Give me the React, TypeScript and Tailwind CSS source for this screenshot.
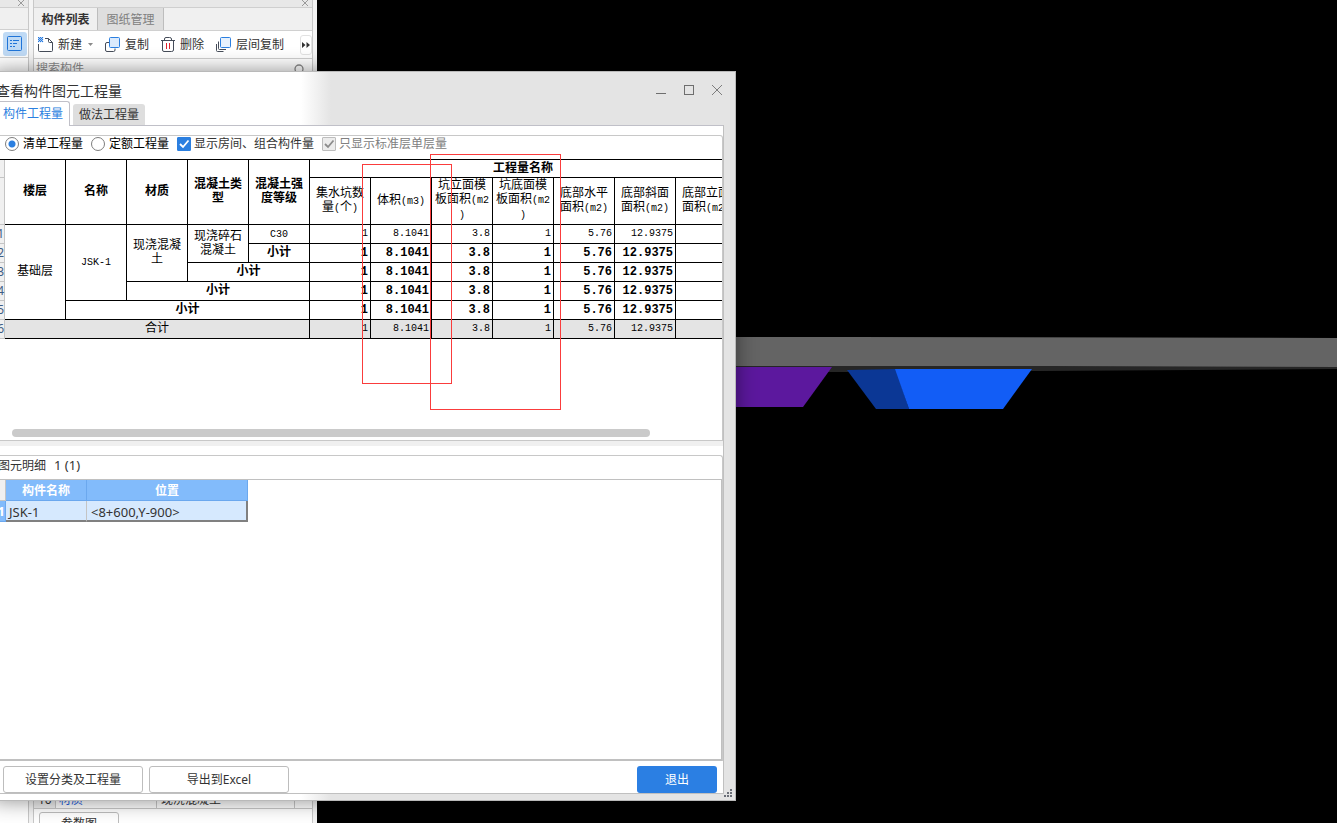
import React from 'react';

const GREY_TEXT = 'text-[#333333]';

/* ---------- model view behind the windows ---------- */

function ModelView() {
  return (
    <div className="relative min-w-0 flex-1 overflow-hidden bg-black">
      <svg className="absolute top-[330px] left-0" width="1020" height="90" viewBox="317 330 1020 90">
        <polygon points="700,366 1337,364 1337,369 1040,371 847,372 700,372" fill="#262626" />
        <polygon points="700,337 847,337 1337,338 1337,367 1050,366 700,366" fill="#646464" />
        <polygon points="700,367 832,367 803,407 700,407" fill="#5c189e" />
        <polygon points="847,370 896,369 909,409 876,409" fill="#0b3795" />
        <polygon points="895,369 1032,369 1003,409 909,409" fill="#125df6" />
      </svg>
    </div>
  );
}

/* ---------- component list panel ---------- */

function CloseGlyph() {
  return (
    <svg width="8" height="8" viewBox="0 0 8 8" stroke="#9a9a9a" fill="none">
      <path d="M1 0 L7 6 M7 0 L1 6" />
    </svg>
  );
}

function NewIcon() {
  return (
    <svg width="16" height="16" viewBox="0 0 16 16" fill="none" stroke="#454c59">
      <path d="M.5 7 V13.500 Q.5 14.500 1.500 14.500 H13.500 Q14.500 14.500 14.500 13.500 V5.500 L10.500 1.500 H7" />
      <path d="M10.500 1.500 V4.500 Q10.500 5.500 11.500 5.500 H14.500" />
      <path
        d="M0 0h1v1h-1z M2 0h1v1h-1z M4 0h1v1h-1z M1 1h1v1h-1z M3 1h1v1h-1z M0 2h1v1h-1z M2 2h1v1h-1z M4 2h1v1h-1z M1 3h1v1h-1z M3 3h1v1h-1z M0 4h1v1h-1z M2 4h1v1h-1z M4 4h1v1h-1z"
        fill="#2b7fe0"
        stroke="#2b7fe0"
        strokeWidth=".3"
      />
    </svg>
  );
}

function CopyIcon() {
  return (
    <svg width="16" height="16" viewBox="0 0 16 16" fill="none">
      <path d="M4 5.500 H2 Q.5 5.500 .5 7 V13 Q.5 14.500 2 14.500 H8.500 Q10 14.500 10 13 V11.500" stroke="#454c59" />
      <rect x="4.500" y=".5" width="10" height="10" rx="1" fill="#dbeafc" stroke="#2b7fe0" />
    </svg>
  );
}

function DeleteIcon() {
  return (
    <svg width="14" height="16" viewBox="0 0 14 16" fill="none" stroke="#454c59">
      <path d="M0 3.500 H14 M3.500 3.500 V2 Q3.500 .5 5 .5 H8.500 Q10.500 .5 10.500 2 V3.500" />
      <path d="M1.500 3.500 V13 Q1.500 14.500 3 14.500 H10.500 Q12.500 14.500 12.500 13 V3.500" />
      <path d="M5.500 6 V12 M8.500 6 V12" stroke="#e0242f" />
    </svg>
  );
}

function LayerCopyIcon() {
  return (
    <svg width="16" height="16" viewBox="0 0 16 16" fill="none">
      <path d="M.5 7 V13.500 Q.5 14.500 1.500 14.500 H7.500 M2.500 4.500 V11.500 Q2.500 12.500 3.500 12.500 H10" stroke="#454c59" />
      <rect x="4.500" y=".5" width="10" height="10" rx="1" fill="#e6f1fd" stroke="#2b7fe0" />
    </svg>
  );
}

function IconRail() {
  return (
    <div className="flex w-[29px] flex-col border-r border-[#c8c8c8] bg-white">
      <div className="flex h-2 items-start justify-end border-b border-[#cfcfcf] bg-[#e8e8e8] pr-[3px]">
        <CloseGlyph />
      </div>
      <div className="h-[22px] border-b border-[#d0d0d0] bg-[#f0f0f0]" />
      <div className="flex h-7 items-center border-b border-[#d0d0d0] pl-[3px]">
        <button aria-label="列表" className="flex size-6 items-center justify-center rounded-[3px] bg-[#bfdaf5]">
          <svg width="16" height="16" viewBox="0 0 16 16" fill="none" stroke="#1f74d8">
            <rect x=".5" y=".5" width="14" height="14" rx="1" />
            <path d="M3 4.500 H5 M6 4.500 H12 M3 7.500 H5 M6 7.500 H10 M3 10.500 H5 M6 10.500 H8" />
          </svg>
        </button>
      </div>
    </div>
  );
}

function ComponentPanel() {
  return (
    <div className="flex w-[280px] flex-col border-x border-[#c8c8c8] bg-white">
      <div className="flex h-2 items-start justify-end border-b border-[#cfcfcf] bg-[#e8e8e8] pr-[3px]">
        <CloseGlyph />
      </div>
      <div className="flex h-[23px] border-b border-[#d0d0d0] bg-[#f0f0f0]">
        <button className="w-16 border-r border-[#bdbdbd] pt-0.5 font-bold">构件列表</button>
        <button className="w-[66px] border-r border-[#bdbdbd] bg-[#dedede] pt-0.5 text-[#808080]">图纸管理</button>
      </div>
      <div className="flex h-7 items-center border-b border-[#cfcfcf] pl-1">
        <button className="flex items-center gap-1">
          <NewIcon />
          新建
        </button>
        <svg className="mr-3 ml-1.5" width="5" height="3" viewBox="0 0 5 3" fill="#8a8a8a">
          <path d="M0 0 H5 L2.500 3 Z" />
        </svg>
        <button className="mr-3 flex items-center gap-1">
          <CopyIcon />
          复制
        </button>
        <button className="mr-3 flex items-center gap-[5px]">
          <DeleteIcon />
          删除
        </button>
        <button className="flex items-center gap-1">
          <LayerCopyIcon />
          层间复制
        </button>
        <button aria-label="更多" className="ml-auto flex h-5 w-3 items-center justify-center rounded-[3px] border border-[#e2e2e2]">
          <svg width="8" height="6" viewBox="0 0 8 6" fill="#333333" className="shrink-0">
            <path d="M0 0 L3.500 3 L0 6 Z M4.500 0 L8 3 L4.500 6 Z" />
          </svg>
        </button>
      </div>
      <div className="flex h-5 items-center px-0.5">
        <input
          type="text"
          aria-label="搜索构件"
          placeholder="搜索构件"
          className="min-w-0 flex-1 outline-none placeholder:text-[#8c8c8c]"
        />
        <svg className="mr-1" width="14" height="14" viewBox="0 0 14 14" fill="none" stroke="#8a8a8a" strokeWidth="1.300">
          <circle cx="7" cy="7" r="4" />
          <path d="M10 10 L13 13" />
        </svg>
      </div>

      <div className="mt-auto">
        <table className="w-full table-fixed border-separate border-spacing-0">
          <tbody>
            <tr className="h-[18px]">
              <td className="w-[22px] border-r border-b border-[#c8c8c8] bg-[#efefef] p-0 pl-1">10</td>
              <td className="w-[101px] border-r border-b border-[#c8c8c8] p-0 pl-[3px] text-[#1f5fe0]">材质</td>
              <td className="border-r border-b border-[#c8c8c8] p-0 pl-1">现浇混凝土</td>
              <td className="w-[17px] border-b border-[#c8c8c8] p-0" />
            </tr>
          </tbody>
        </table>
        <div className="h-[14px] overflow-hidden pt-[3px] pl-[5px]">
          <button className="h-6 w-20 rounded-[3px] border border-[#bdbdbd] bg-white">参数图</button>
        </div>
      </div>
    </div>
  );
}

/* ---------- quantity table ---------- */

// Latin runs are set smaller so that they take half of a CJK cell
function Mixed({ text }: { text: string }) {
  return (
    <>
      {text.split(/([\x21-\x7e]+)/).map((part, i) =>
        i % 2 ? (
          <span key={i} className="text-[10px]">
            {part}
          </span>
        ) : (
          part
        ),
      )}
    </>
  );
}

const groupHeads = [['楼层'], ['名称'], ['材质'], ['混凝土类', '型'], ['混凝土强', '度等级']];

const quantityHeads = [
  ['集水坑数', '量(个)'],
  ['体积(m3)'],
  ['坑立面模', '板面积(m2', ')'],
  ['坑底面模', '板面积(m2', ')'],
  ['底部水平', '面积(m2)'],
  ['底部斜面', '面积(m2)'],
  ['底部立面', '面积(m2)'],
];

const values = ['1', '8.1041', '3.8', '1', '5.76', '12.9375', ''];

const CELL = 'border-r border-b border-black p-0 text-center';

function Lines({ lines }: { lines: string[] }) {
  return (
    <>
      {lines.map((line) => (
        <div key={line} className="whitespace-nowrap">
          <Mixed text={line} />
        </div>
      ))}
    </>
  );
}

function RowNumber({ n }: { n: string }) {
  return (
    <th className="border-r border-b border-[#c4c4c4] bg-[#f0f0f0] p-0 text-right font-['Noto_Sans',sans-serif] font-normal text-[#3f5d85]">
      {n}
    </th>
  );
}

function Values({ bold }: { bold?: boolean }) {
  return (
    <>
      {values.map((value, i) => (
        <td
          key={i}
          className={`border-r border-b border-black p-0 pr-0.5 text-right ${bold ? 'font-bold' : 'text-[10px]'}`}
        >
          {value}
        </td>
      ))}
    </>
  );
}

function QuantityTable() {
  return (
    <table className="w-[744px] table-fixed border-separate border-spacing-0 border-t border-black font-['Liberation_Mono','Noto_Sans_CJK_SC',monospace] leading-[14px] text-black">
      <colgroup>
        <col className="w-3" />
        {Array.from({ length: 12 }, (_, i) => (
          <col key={i} className="w-[61px]" />
        ))}
      </colgroup>
      <thead>
        <tr className="h-[18px]">
          <RowNumber n="" />
          {groupHeads.map((lines) => (
            <th key={lines[0]} rowSpan={2} className={CELL}>
              <Lines lines={lines} />
            </th>
          ))}
          <th colSpan={7} className={CELL}>
            工程量名称
          </th>
        </tr>
        <tr className="h-[47px]">
          <RowNumber n="" />
          {quantityHeads.map((lines) => (
            <th key={lines.join('')} className={`${CELL} font-normal`}>
              <Lines lines={lines} />
            </th>
          ))}
        </tr>
      </thead>
      <tbody>
        <tr className="h-[19px]">
          <RowNumber n="1" />
          <td rowSpan={5} className={CELL}>基础层</td>
          <td rowSpan={4} className={CELL}>
            <Mixed text="JSK-1" />
          </td>
          <td rowSpan={3} className={CELL}>
            <Lines lines={['现浇混凝', '土']} />
          </td>
          <td rowSpan={2} className={CELL}>
            <Lines lines={['现浇碎石', '混凝土']} />
          </td>
          <td className={CELL}>
            <Mixed text="C30" />
          </td>
          <Values />
        </tr>
        {[1, 2, 3, 4].map((span) => (
          <tr key={span} className="h-[19px]">
            <RowNumber n={String(span + 1)} />
            <td colSpan={span} className={`${CELL} font-bold`}>
              小计
            </td>
            <Values bold />
          </tr>
        ))}
        <tr className="h-[19px] bg-[#e4e4e4]">
          <RowNumber n="6" />
          <td colSpan={5} className={CELL}>合计</td>
          <Values />
        </tr>
      </tbody>
    </table>
  );
}

/* ---------- dialog ---------- */

function Radio({ label, checked }: { label: string; checked?: boolean }) {
  return (
    <label className="flex items-center gap-1 text-black">
      <input
        type="radio"
        name="quantity-kind"
        defaultChecked={checked}
        className="size-3.5 appearance-none rounded-full border border-[#7d7d7d] bg-white checked:bg-[radial-gradient(circle,#2b7fe0_3px,white_4px)]"
      />
      {label}
    </label>
  );
}

function Check({ label, disabled }: { label: string; disabled?: boolean }) {
  return (
    <label className={`flex items-center gap-[3px] ${disabled ? 'text-[#808080]' : GREY_TEXT}`}>
      <span className="grid size-3.5">
        <input
          type="checkbox"
          defaultChecked
          disabled={disabled}
          className="col-start-1 row-start-1 size-3.5 appearance-none rounded-[1px] border border-[#2b7fe0] bg-[#2b7fe0] disabled:border-[#bdbdbd] disabled:bg-[#ececec]"
        />
        <svg
          className="pointer-events-none col-start-1 row-start-1"
          width="14"
          height="14"
          viewBox="0 0 14 14"
          fill="none"
          stroke={disabled ? '#8c8c8c' : 'white'}
          strokeWidth="1.800"
        >
          <path d="M3 7 L6 10 L11.500 3.500" />
        </svg>
      </span>
      {label}
    </label>
  );
}

function TitleBar() {
  return (
    <div className="flex h-[29px] items-end justify-between pr-3">
      <h1 className="pl-[3px] text-sm leading-5">查看构件图元工程量</h1>
      <div className="flex gap-4 pb-[5px]">
        <button aria-label="最小化">
          <svg width="12" height="12" viewBox="0 0 12 12" fill="none" stroke="#6e6e6e">
            <path d="M1 9.500 H11" />
          </svg>
        </button>
        <button aria-label="最大化">
          <svg width="12" height="12" viewBox="0 0 12 12" fill="none" stroke="#6e6e6e">
            <rect x="1.500" y="1.500" width="9" height="9" />
          </svg>
        </button>
        <button aria-label="关闭">
          <svg width="12" height="12" viewBox="0 0 12 12" fill="none" stroke="#7d7d7d">
            <path d="M1 1 L11 11 M11 1 L1 11" />
          </svg>
        </button>
      </div>
    </div>
  );
}

function DetailTable() {
  const head = 'border-r border-b border-[#6ba8ee] bg-[#82bbfb] p-0 pt-0.5 text-center font-bold text-white';
  return (
    <table className="w-[255px] table-fixed border-separate border-spacing-0 leading-4">
      <thead>
        <tr className="h-[21px]">
          <th className="w-[13px] border-r border-b border-[#c4c4c4] bg-[#f0f0f0] p-0" />
          <th className={`${head} w-[81px]`}>构件名称</th>
          <th className={head}>位置</th>
        </tr>
      </thead>
      <tbody>
        <tr className="h-[21px] bg-[#d6e9fe] text-[13px]">
          <th className="border-r border-b border-[#6ba8ee] bg-[#82bbfb] p-0 text-right font-bold text-white">1</th>
          <td className="border-r border-b-2 border-r-[#c4c4c4] border-b-[#808080] p-0 pt-0.5 pl-[3px]">JSK-1</td>
          <td className="border-r-2 border-b-2 border-[#808080] p-0 pt-0.5 pl-1">&lt;8+600,Y-900&gt;</td>
        </tr>
      </tbody>
    </table>
  );
}

function QuantityDialog() {
  const plainButton = 'h-[27px] w-[140px] rounded-[3px] border border-[#bdbdbd] bg-white';
  return (
    <div
      role="dialog"
      aria-label="查看构件图元工程量"
      className="absolute top-[71px] bottom-[22px] -left-2 flex w-[744px] flex-col border border-[#b9b9b9] bg-[linear-gradient(to_right,white_308px,#e4e4e4_338px)] pb-[6px] shadow-[0_0_20px_rgba(0,0,0,0.45)]"
    >
      <TitleBar />

      {/* tabs */}
      <div className="flex h-6 items-end gap-[3px]">
        <button className="h-6 w-[77px] rounded-tr-[3px] border-t border-r border-[#c0c0c8] bg-white pl-1 text-[#2b7fe0]">
          构件工程量
        </button>
        <button className="h-[21px] w-[72px] rounded-t-[3px] bg-[#dedede]">做法工程量</button>
      </div>

      <div className="mr-[11px] flex min-h-0 flex-1 flex-col border-r border-b border-[#c0c0c0] bg-white">
        <div className="ml-[76px] h-px bg-[#c0c0c8]" />

        {/* quantities */}
        <section className="mt-[9px] flex h-[306px] shrink-0 flex-col overflow-hidden rounded-tr-[3px] border-t border-r border-b border-[#c8c8c8]">
          <div className="flex h-[23px] shrink-0 items-start gap-2 pl-3 leading-4">
            <Radio label="清单工程量" checked />
            <Radio label="定额工程量" />
            <Check label="显示房间、组合构件量" />
            <Check label="只显示标准层单层量" disabled />
          </div>
          <div className="min-h-0 flex-1 overflow-hidden">
            <QuantityTable />
          </div>
          <div className="mb-[3px] ml-[19px] h-2 w-[638px] shrink-0 rounded-full bg-[#cacaca]" />
        </section>
        <div className="h-[5px] shrink-0 bg-[#f0f0f0]" />

        {/* element details */}
        <section className="mt-[9px] flex min-h-0 flex-1 flex-col rounded-tr-[3px] border-t border-r border-[#c8c8c8]">
          <h2 className="h-6 shrink-0 border-b border-[#c0c0c0] pl-[5px] leading-[18px]">
            图元明细<span className="ml-2 text-[13px]">1 (1)</span>
          </h2>
          <div className="min-h-0 flex-1 border-r border-b-2 border-[#c0c0c0]">
            <DetailTable />
          </div>
        </section>

        <div className="flex h-8 shrink-0 items-end gap-1.5 pr-1.5 pl-[10px]">
          <button className={plainButton}>设置分类及工程量</button>
          <button className={plainButton}>导出到Excel</button>
          <button className="ml-auto h-[27px] w-20 rounded-[3px] bg-[#2b7fe3] text-white">退出</button>
        </div>
      </div>

      <svg className="absolute right-0.5 bottom-0.5" width="9" height="9" viewBox="0 0 9 9" fill="#6b6f78">
        <path d="M6 0h2v2h-2z M3 3h2v2h-2z M6 3h2v2h-2z M0 6h2v2h-2z M3 6h2v2h-2z M6 6h2v2h-2z" />
      </svg>

      {/* marked columns */}
      <div className="pointer-events-none absolute top-[92px] left-[369px] h-[220px] w-[90px] border border-[#fa3c3c]" />
      <div className="pointer-events-none absolute top-[82px] left-[437px] h-[256px] w-[131px] border border-[#fa3c3c]" />
    </div>
  );
}

export default function App() {
  return (
    <div
      className={`relative flex h-screen overflow-hidden bg-[#f0f0f0] font-['Noto_Sans','Noto_Sans_CJK_SC',sans-serif] text-xs ${GREY_TEXT}`}
    >
      <IconRail />
      <div className="w-1 bg-[#f4f4f4]" />
      <ComponentPanel />
      <div className="w-1 bg-[#f4f4f4]" />
      <ModelView />
      <QuantityDialog />
    </div>
  );
}
